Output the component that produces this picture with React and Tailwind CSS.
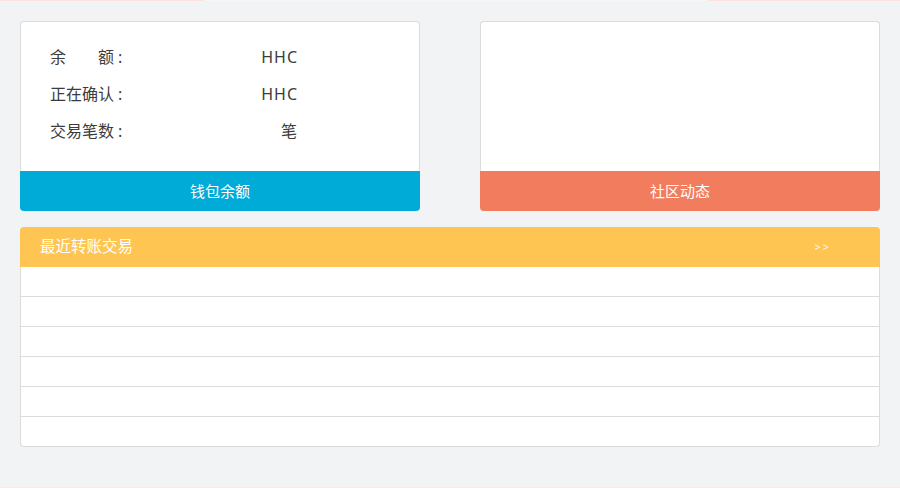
import React from 'react'

const ROWS = [
  { label: '余　　额', value: 'HHC' },
  { label: '正在确认', value: 'HHC' },
  { label: '交易笔数', value: '笔' },
]

export default function App() {
  return (
    <div className="w-full h-[488px] bg-[#f2f3f5] flex flex-col font-['Noto_Sans','Noto_Sans_CJK_SC',sans-serif]">
      {/* top strip */}
      <div className="flex h-px">
        <div className="w-[204px] bg-[#fbe3df]" />
        <div className="flex-1 bg-[#f5f6f8]" />
        <div className="w-[192px] bg-[#fbe3df]" />
      </div>

      <div className="flex-1 px-5 pt-5">
        <div className="flex gap-[60px]">
          {/* wallet */}
          <div className="w-[400px] h-[190px] flex flex-col">
            <div className="flex-1 bg-white border border-b-0 border-[#dcdcdc] rounded-t pt-4 pl-[29px]">
              {ROWS.map(r => (
                <div key={r.label} className="flex w-[248px] h-[37px] items-center justify-between text-[16px] text-[#3c3c3c]">
                  <span>
                    {r.label}
                    <span className="ml-[4px]">:</span>
                  </span>
                  <span className="tracking-[1px]">{r.value}</span>
                </div>
              ))}
            </div>
            <div className="h-10 bg-[#01abd8] rounded-b flex items-center justify-center text-white text-[15px]">
              钱包余额
            </div>
          </div>

          {/* community */}
          <div className="w-[400px] h-[190px] flex flex-col">
            <div className="flex-1 bg-white border border-b-0 border-[#dcdcdc] rounded-t" />
            <div className="h-10 bg-[#f27c5e] rounded-b flex items-center justify-center text-white text-[15px]">
              社区动态
            </div>
          </div>
        </div>

        {/* recent transfers */}
        <div className="mt-4 w-[860px] h-[220px] flex flex-col">
          <div className="h-10 bg-[#fec553] rounded-t flex items-center justify-between pl-5 pr-[49px] text-white">
            <span className="text-[15.5px]">最近转账交易</span>
            <span className="text-[11px] tracking-[2px] opacity-90">&gt;&gt;</span>
          </div>
          <div className="flex-1 bg-white border border-t-0 border-[#dcdcdc] rounded-b">
            {[0, 1, 2, 3, 4].map(i => (
              <div key={i} className="h-[30px] border-b border-[#dcdcdc]" />
            ))}
          </div>
        </div>
      </div>

      <div className="h-px bg-[#f6e9e6]" />
    </div>
  )
}
